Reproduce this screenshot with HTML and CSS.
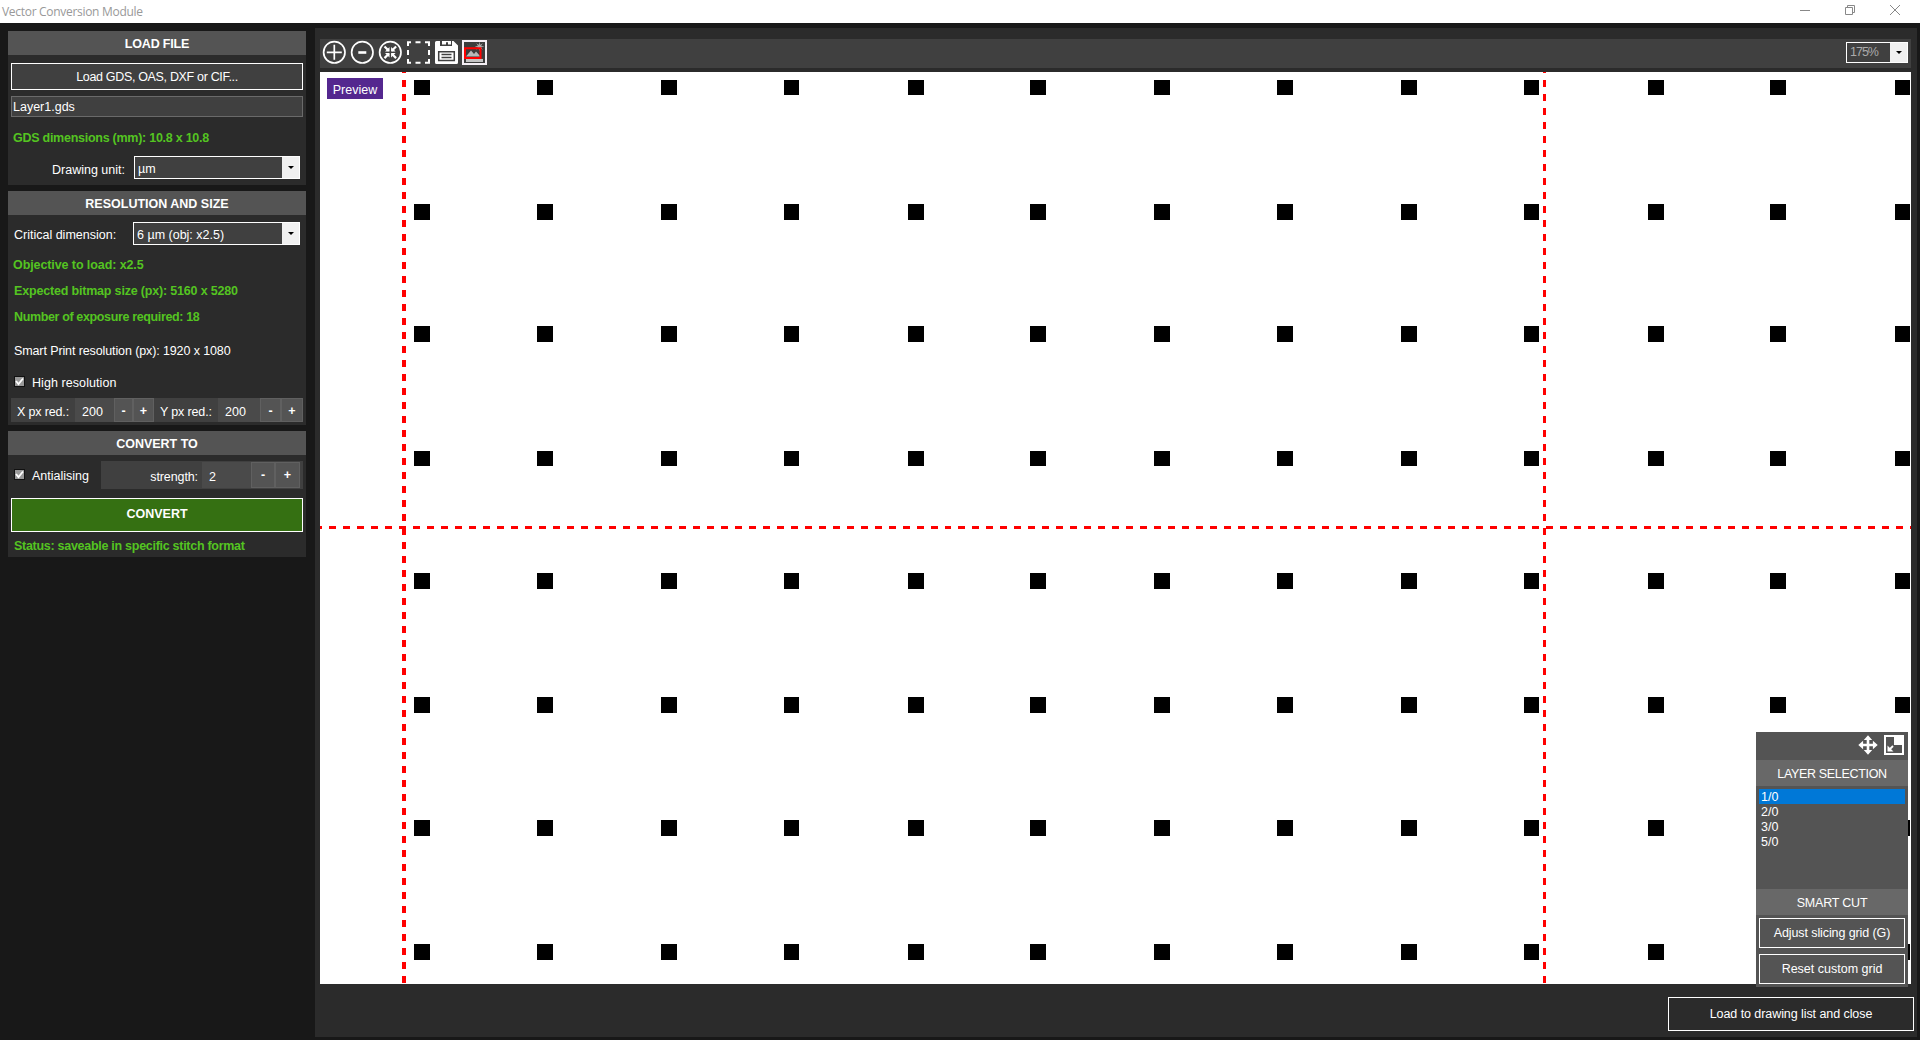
FILE: index.html
```html
<!DOCTYPE html>
<html lang="en">
<head>
<meta charset="utf-8">
<title>Vector Conversion Module</title>
<link rel="stylesheet" href="styles.css">
</head>
<body>
<header class="titlebar">
  <span class="title">Vector Conversion Module</span>
  <div class="winbtns">
    <svg width="10" height="10" viewBox="0 0 10 10"><path d="M0 5.500h10"/></svg>
    <svg width="10" height="10" viewBox="0 0 10 10"><path d="M.5 2.500h7v7h-7zM2.500 2.500v-2h7v7h-2"/></svg>
    <svg width="10" height="10" viewBox="0 0 10 10"><path d="M0 0l10 10M10 0l-10 10"/></svg>
  </div>
</header>
<div class="app">
  <aside class="side">
    <section class="panel load">
      <h2 class="tight-s">LOAD FILE</h2>
      <button class="btn">Load GDS, OAS, DXF or CIF...</button>
      <div class="field">Layer1.gds</div>
      <p class="info dims">GDS dimensions (mm): 10.8 x 10.8</p>
      <div class="row unit"><span>Drawing unit:</span><div class="combo"><span>µm</span><i class="arrow"></i></div></div>
    </section>
    <section class="panel res">
      <h2>RESOLUTION AND SIZE</h2>
      <div class="row crit"><span>Critical dimension:</span><div class="combo"><span>6 µm (obj: x2.5)</span><i class="arrow"></i></div></div>
      <p class="info obj">Objective to load: x2.5</p>
      <p class="info exp">Expected bitmap size (px): 5160 x 5280</p>
      <p class="info num">Number of exposure required: 18</p>
      <p class="plain">Smart Print resolution (px): 1920 x 1080</p>
      <div class="row check"><i class="box"><svg width="9" height="9" viewBox="0 0 9 9"><path d="M1 4l2.500 3L8 1.500"/></svg></i><span>High resolution</span></div>
      <div class="spins">
        <span class="lab">X px red.:</span><span class="num1">200</span><b>-</b><b>+</b>
        <span class="lab">Y px red.:</span><span class="num2">200</span><b>-</b><b>+</b>
      </div>
    </section>
    <section class="panel conv">
      <h2>CONVERT TO</h2>
      <div class="row anti">
        <i class="box"><svg width="9" height="9" viewBox="0 0 9 9"><path d="M1 4l2.500 3L8 1.500"/></svg></i><span class="name">Antialising</span>
        <div class="strength"><span class="lab">strength:</span><span class="val">2</span><b>-</b><b>+</b></div>
      </div>
      <button class="btn go">CONVERT</button>
      <p class="info status">Status: saveable in specific stitch format</p>
    </section>
  </aside>
  <main class="main">
    <div class="toolbar">
      <div class="tools">
        <svg width="24" height="24" viewBox="0 0 24 24"><circle cx="12.300" cy="12.300" r="10.700"/><path d="M12.300 4.800v15M4.800 12.300h15"/></svg>
        <svg width="24" height="24" viewBox="0 0 24 24"><circle cx="12.300" cy="12.300" r="10.700"/><path d="M8.300 12.500h8" stroke-width="2.600"/></svg>
        <svg width="24" height="24" viewBox="0 0 24 24"><circle cx="12.300" cy="12.300" r="10.700"/><path d="M6.500 6.500l4.300 4.300M18.100 6.500l-4.300 4.300M6.500 18.100l4.300-4.300M18.100 18.100l-4.300-4.300" stroke-width="2.200"/><path class="solid" d="M11.500 11.500H7l4.500-4.500zM13.100 11.500h4.500L13.100 7zM11.500 13.100H7l4.500 4.500zM13.100 13.100h4.500l-4.500 4.500z"/></svg>
        <svg width="24" height="24" viewBox="0 0 24 24"><path d="M2 6V2.200h3M9.500 2.200h5M19 2.200h4V6M23 10v5M23 19v3.800h-4M14.500 22.800h-5M5 22.800H2V19M2 15v-5" stroke-width="2"/></svg>
        <svg width="24" height="24" viewBox="0 0 24 24"><path class="solid" d="M1 2.500Q1 1 2.500 1H6v5h12V1h1.500L24 5.500v17q0 1.500-1.500 1.500h-20Q1 24 1 22.500z"/><path class="solid" d="M8 1h4v3.500H8zM14 1h3v3.500h-3zM12 1h2v1.200h-2z"/><path d="M4.700 11.700h15.600v8.800H4.700z" stroke="#404040" stroke-width="1.500"/><path d="M7.500 14.600h10M7.500 17.500h10" stroke="#404040" stroke-width="1.500"/></svg>
        <svg width="25" height="25" viewBox="0 0 25 25"><path d="M1 1h23v23H1z" fill="#3c3c3c" stroke="#f4eef4" stroke-width="2"/><path d="M4 19l2-1 15 1v3H4z" fill="#c4c4c4" stroke="none"/><path d="M4 16.500l5-6 3 3.500 2-2.500 4.500 5z" fill="#b8b8b8" stroke="none"/><circle cx="17.500" cy="6.500" r="2.200" fill="#aaa" stroke="none"/><path d="M17.500 2.500v8M13.500 6.500h8M14.700 3.700l5.600 5.600M20.300 3.700l-5.600 5.600" stroke="#aaa" stroke-width=".8"/><path d="M3 8.300h15.500v9.700H3z" stroke="#f00" stroke-width="2"/></svg>
      </div>
      <div class="combo zoom"><span>175%</span><i class="arrow"></i></div>
    </div>
    <div class="canvas">
      <svg class="drawing" width="1591" height="912" viewBox="320 72 1591 912" shape-rendering="crispEdges">
        <defs><path id="row" d="M414 0h16v16h-16zM537 0h16v16h-16zM661 0h16v16h-16zM784 0h15v16h-15zM908 0h16v16h-16zM1030 0h16v16h-16zM1154 0h16v16h-16zM1277 0h16v16h-16zM1401 0h16v16h-16zM1524 0h15v16h-15zM1648 0h16v16h-16zM1770 0h16v16h-16zM1895 0h15v16h-15z"/></defs>
        <use href="#row" transform="translate(0 80) scale(1 .9375)"/>
        <use href="#row" y="204"/>
        <use href="#row" y="326"/>
        <use href="#row" transform="translate(0 451) scale(1 .9375)"/>
        <use href="#row" y="573"/>
        <use href="#row" y="697"/>
        <use href="#row" y="820"/>
        <use href="#row" y="944"/>
        <g stroke="#f00" stroke-dasharray="7">
          <path d="M315 527.500H951M958 527.500H1911" stroke-width="3"/>
          <path d="M404 66V984" stroke-width="4"/>
          <path d="M1544.500 66V984" stroke-width="3"/>
        </g>
      </svg>
      <div class="tag">Preview</div>
      <div class="layers">
        <div class="lhead">
          <svg width="20" height="20" viewBox="0 0 20 20"><path d="M10 3v14M3 10h14" stroke-width="2.600"/><path class="solid" d="M10 .3l4.200 4.800H5.800zM10 19.700l4.200-4.800H5.800zM.3 10l4.800-4.200v8.400zM19.700 10l-4.800-4.200v8.400z"/></svg>
          <svg width="20" height="20" viewBox="0 0 20 20"><path d="M1 1h18v18H1z" stroke-width="2"/><path class="solid" d="M10 1h9v9h-9zM3.500 10.500v6h6z"/><path d="M5 15l4-4" stroke-width="1.800"/></svg>
        </div>
        <h3 class="sel-title">LAYER SELECTION</h3>
        <ul><li class="sel">1/0</li><li>2/0</li><li>3/0</li><li>5/0</li></ul>
        <h3 class="cut-title">SMART CUT</h3>
        <button class="btn adjust">Adjust slicing grid (G)</button>
        <button class="btn">Reset custom grid</button>
      </div>
    </div>
    <footer><button class="btn close">Load to drawing list and close</button></footer>
  </main>
</div>
</body>
</html>
```
FILE: styles.css
```css
* { box-sizing: border-box; margin: 0; padding: 0; }
body { width: 1920px; height: 1040px; overflow: hidden; background: #181818; color: #fff; font: 12.5px/15px "Liberation Sans", Arial, sans-serif; display: flex; flex-direction: column; }
svg { display: block; fill: none; stroke: #fff; stroke-width: 1.7; flex: none; }
.solid { fill: #fff; stroke: none; }
span, p { white-space: nowrap; }

.titlebar { height: 23px; background: #fff; display: flex; justify-content: space-between; padding: 0 20px 0 2px; color: #999; font: 12px/23px "Open Sans", sans-serif; letter-spacing: -.3px; }
.winbtns { display: flex; gap: 35px; padding-top: 5px; }
.winbtns svg { stroke: #888; stroke-width: 1; }

.app { flex: 1; display: flex; padding: 5px 3px 3px 8px; gap: 9px; min-height: 0; }
.side { width: 298px; padding-top: 3px; display: flex; flex-direction: column; gap: 6px; }
.panel { background: #2b2b2b; flex: none; }
.load { height: 154px; }
.res { height: 234px; }
.conv { height: 126px; }
h2 { height: 24px; background: #545454; font-size: 12.5px; line-height: 27px; font-weight: bold; text-align: center; }
.tight-s { letter-spacing: -.17px; }
.btn { display: block; border: 1px solid #fff; background: #404040; color: #fff; font: inherit; text-align: center; }
.load .btn { width: 292px; height: 27px; margin: 8px 3px 6px; padding-top: 2px; letter-spacing: -.33px; }
.field { width: 292px; height: 21px; margin: 0 3px; border: 1px solid #6a6a6a; background: #404040; line-height: 20px; padding-left: 1px; }
.info { color: #54c421; font-weight: bold; padding-left: 6px; }
.plain { padding-left: 6px; margin-top: 19px; letter-spacing: -.11px; }
.dims { margin-top: 14px; padding-left: 5px; letter-spacing: -.26px; }
.row { display: flex; }
.unit { margin-top: 10px; padding: 0 6px 0 44px; justify-content: space-between; line-height: 28px; }
.combo { width: 166px; height: 23px; border: 1px solid #fff; background: #404040; display: flex; justify-content: space-between; line-height: 24px; padding-left: 3px; }
.arrow { width: 17px; background: #f0f0f0; display: flex; align-items: center; justify-content: center; }
.arrow::after { content: ""; border: 3px solid transparent; border-top-color: #000; border-bottom: 0; width: 0; }
.crit { height: 25px; margin-top: 7px; padding: 0 6px 0 6px; justify-content: space-between; line-height: 27px; }
.crit .combo { width: 167px; line-height: 24px; }
.obj { margin-top: 11px; padding-left: 5px; letter-spacing: -.09px; }
.exp, .num { margin-top: 11px; }
.exp { letter-spacing: -.18px; }
.num { letter-spacing: -.36px; }
.check { margin-top: 17px; padding-left: 6px; gap: 7px; letter-spacing: .07px; }
.box { width: 11px; height: 11px; border: 1px solid #111; background: #999; flex: none; }
.box svg { stroke-width: 1.8; }
.spins { margin: 7px 3px 0; height: 24px; background: #404040; display: grid; grid-template-columns: 64px 39px 19px 21px 64px 42px 21px 22px; line-height: 28px; }
.spins > * { height: 24px; }
.spins b, .strength b { background: #545454; border: 1px solid #606060; text-align: center; line-height: 25px; }
.spins .lab { padding-left: 6px; letter-spacing: -.15px; }
.num1, .num2 { background: #4a4a4a; padding-left: 7px; }
.anti { padding-left: 6px; height: 34px; }
.anti .box { margin-top: 14px; }
.name { padding: 14px 0 0 7px; width: 76px; }
.strength { width: 202px; height: 28px; margin-top: 6px; background: #404040; display: grid; grid-template-columns: 101px 49px 24px 25px; padding-top: 1px; line-height: 30px; }
.strength > * { height: 26px; }
.strength .lab { text-align: right; padding-right: 4px; letter-spacing: -.1px; }
.strength .val { background: #4a4a4a; padding-left: 7px; }
.go { width: 292px; height: 34px; margin: 9px 3px 0; padding-bottom: 1px; background: #357012; font-weight: bold; }
.status { margin-top: 7px; letter-spacing: -.28px; }

.main { width: 1602px; background: #2b2b2b; padding: 11px 6px 6px 5px; display: flex; flex-direction: column; }
.toolbar { height: 29px; background: #404040; display: flex; justify-content: space-between; padding: 0 3px 0 2px; }
.tools { display: flex; gap: 4px; padding-top: 1px; }
.zoom { width: 62px; height: 21px; margin-top: 3px; color: #aaa; line-height: 18px; letter-spacing: -1px; }
.canvas { position: relative; height: 912px; margin-top: 4px; background: #fff; }
.drawing { fill: #000; stroke: none; }
.tag { position: absolute; left: 7px; top: 6px; width: 56px; height: 21px; background: #54278f; text-align: center; line-height: 24px; }
.layers { position: absolute; left: 1436px; top: 660px; width: 152px; height: 255px; background: #545454; }
.lhead { height: 28px; display: flex; justify-content: flex-end; gap: 6px; padding: 3px 4px 0; }
h3 { height: 26px; background: #686868; font: inherit; line-height: 29px; text-align: center; }
.sel-title { letter-spacing: -.33px; }
.cut-title { letter-spacing: -.2px; }
ul { list-style: none; height: 103px; padding: 3px 3px 0; }
li { height: 15px; padding-left: 2px; line-height: 17px; }
.sel { background: #0078d7; }
.layers .btn { width: 146px; height: 30px; margin: 3px 3px 6px; background: #545454; }
.layers .adjust { letter-spacing: -.1px; }
footer { display: flex; justify-content: flex-end; margin: 13px -3px 0 0; }
.close { width: 246px; height: 34px; background: #2b2b2b; letter-spacing: -.07px; }
```
